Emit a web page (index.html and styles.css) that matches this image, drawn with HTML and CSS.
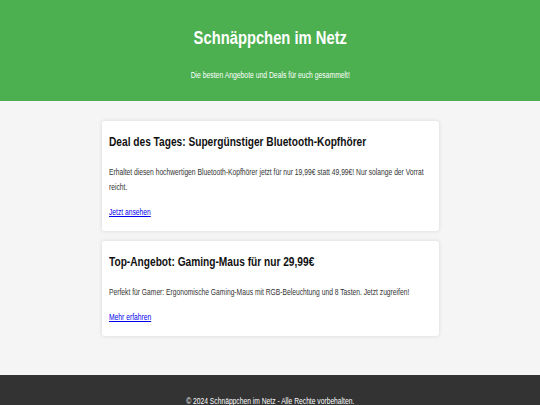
FILE: index.html
```html
<!DOCTYPE html>
<html lang="de">
<head>
<meta charset="utf-8">
<title>Schnäppchen im Netz</title>
<link rel="stylesheet" href="styles.css">
</head>
<body>
<header class="site-header">
  <h1 class="site-title">Schnäppchen im Netz</h1>
  <p class="site-tagline">Die besten Angebote und Deals für euch gesammelt!</p>
</header>
<main class="deals">
  <article class="deal">
    <h2 class="deal-title">Deal des Tages: Supergünstiger Bluetooth-Kopfhörer</h2>
    <p class="deal-text">Erhaltet diesen hochwertigen Bluetooth-Kopfhörer jetzt für nur 19,99€ statt 49,99€! Nur solange der Vorrat reicht.</p>
    <p class="deal-more"><a href="#">Jetzt ansehen</a></p>
  </article>
  <article class="deal">
    <h2 class="deal-title">Top-Angebot: Gaming-Maus für nur 29,99€</h2>
    <p class="deal-text">Perfekt für Gamer: Ergonomische Gaming-Maus mit RGB-Beleuchtung und 8 Tasten. Jetzt zugreifen!</p>
    <p class="deal-more"><a href="#">Mehr erfahren</a></p>
  </article>
</main>
<footer class="site-footer">
  <p class="footer-text">© 2024 Schnäppchen im Netz - Alle Rechte vorbehalten.</p>
</footer>
</body>
</html>
```

FILE: styles.css
```css
html, body {
  margin: 0;
  padding: 0;
}
body {
  font-family: "Liberation Sans", Arial, Helvetica, sans-serif;
  background: #f5f5f5;
  color: #333;
  overflow: hidden;
}

/* narrow (Arial Narrow-like) text: condensed horizontally */
.site-title,
.site-tagline,
.footer-text {
  width: calc(100% / 0.82);
  margin-left: calc(50% - 50% / 0.82);
  transform: scaleX(0.82);
  transform-origin: 50% 0;
}
.deal-title,
.deal-text,
.deal-more {
  width: calc(100% / 0.82);
  transform: scaleX(0.82);
  transform-origin: 0 0;
}

.site-header {
  background: #4caf50;
  color: #fff;
  text-align: center;
  padding: 27px 0 0;
  height: 101px;
  box-sizing: border-box;
}
.site-title {
  margin-top: 0;
  margin-bottom: 0;
  font-size: 18px;
  line-height: 22px;
  font-weight: bold;
}
.site-tagline {
  margin-top: 20px;
  margin-bottom: 0;
  font-size: 8.3px;
  line-height: 12px;
}
.deals {
  width: 337px;
  margin: 0 auto;
  padding: 20px 0 39px;
  display: flex;
  flex-direction: column;
  gap: 10px;
}
.deal {
  background: #fff;
  border-radius: 3px;
  box-shadow: 0 0 4px rgba(0, 0, 0, 0.12);
  padding: 7px;
}
.deal-title {
  margin: 5px 0 0;
  font-size: 12.4px;
  line-height: 18px;
  color: #111;
}
.deal-text {
  margin: 14px 0 10px;
  font-size: 8.2px;
  line-height: 15px;
}
.deal-more {
  margin: 0 0 4px;
  font-size: 8.2px;
  line-height: 15px;
}
.deal-more a {
  color: #0000ee;
}
.site-footer {
  background: #333;
  color: #fff;
  text-align: center;
  padding: 21px 0 19px;
}
.footer-text {
  margin-top: 0;
  margin-bottom: 0;
  font-size: 8.2px;
  line-height: 12px;
}
```
